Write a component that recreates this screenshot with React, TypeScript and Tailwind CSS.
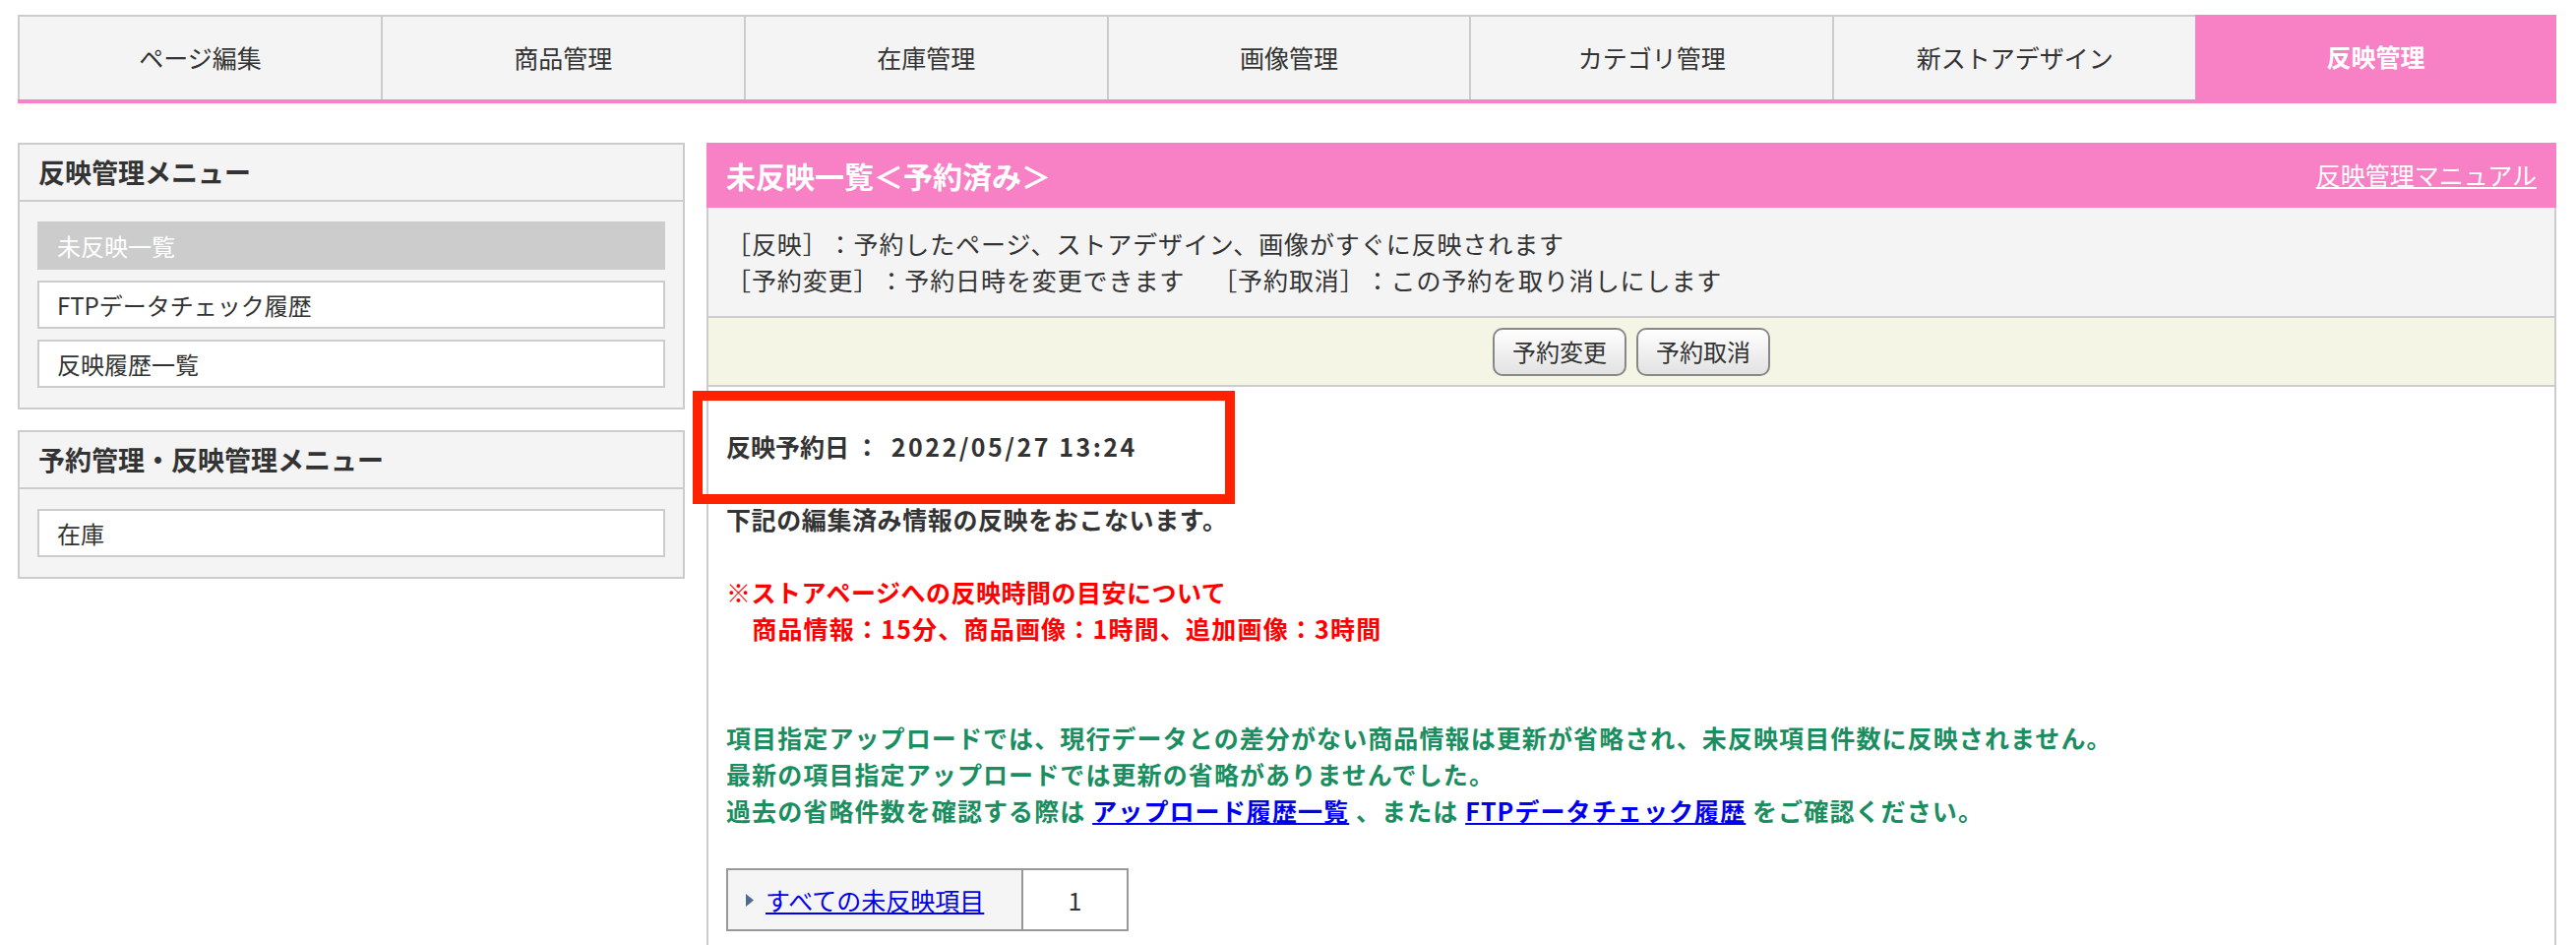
import React from "react";

const tabs = ["ページ編集", "商品管理", "在庫管理", "画像管理", "カテゴリ管理", "新ストアデザイン", "反映管理"];

function SideBox({ title, items }: { title: string; items: { label: string; active?: boolean }[] }) {
  return (
    <div className="border-2 border-[#ccc] bg-[#f4f4f4]">
      <div className="h-[58px] flex items-center px-[19px] border-b-2 border-[#ccc] text-[27px] font-bold text-[#333]">
        {title}
      </div>
      <div className="flex flex-col gap-[11px] px-[18px] py-[20px]">
        {items.map((it) =>
          it.active ? (
            <div key={it.label} className="h-[49px] flex items-center pl-[20px] bg-[#ccc] text-white text-[24px]">
              {it.label}
            </div>
          ) : (
            <div key={it.label} className="h-[49px] flex items-center pl-[18px] bg-white border-2 border-[#ccc] text-[#333] text-[24px]">
              {it.label}
            </div>
          )
        )}
      </div>
    </div>
  );
}

export default function App() {
  return (
    <div className="min-h-screen bg-white pt-[15px] pl-[18px] pr-[20px] font-['Noto_Sans_CJK_JP',sans-serif] text-[#333]">
      {/* global menu */}
      <nav className="flex border-b-4 border-[#f880c4]">
        {tabs.map((t, i) =>
          i === tabs.length - 1 ? (
            <div key={t} className="flex-1 h-[86px] flex items-center justify-center bg-[#f880c4] text-white font-bold text-[25px]">
              {t}
            </div>
          ) : (
            <div key={t} className="flex-1 h-[86px] flex items-center justify-center bg-[#f4f4f4] border-t-2 border-l-2 border-[#ccc] text-[25px]">
              {t}
            </div>
          )
        )}
      </nav>

      <div className="flex gap-[22px] mt-[40px]">
        <aside className="w-[678px] shrink-0 flex flex-col gap-[21px]">
          <SideBox
            title="反映管理メニュー"
            items={[{ label: "未反映一覧", active: true }, { label: "FTPデータチェック履歴" }, { label: "反映履歴一覧" }]}
          />
          <SideBox title="予約管理・反映管理メニュー" items={[{ label: "在庫" }]} />
        </aside>

        <main className="flex-1 flex flex-col">
          <div className="h-[66px] flex items-center justify-between bg-[#f880c4] px-[20px]">
            <h1 className="text-white font-bold text-[30px]">未反映一覧＜予約済み＞</h1>
            <a href="#" className="text-white underline text-[25px]">反映管理マニュアル</a>
          </div>

          <div className="bg-[#f4f4f4] border-x-2 border-[#ccc] px-[18px] py-[18px] text-[25px] leading-[37px] tracking-[0.9px] [text-spacing-trim:space-all]">
            <p>［反映］：予約したページ、ストアデザイン、画像がすぐに反映されます</p>
            <p>
              ［予約変更］：予約日時を変更できます<span className="ml-[28px]">［予約取消］：この予約を取り消しにします</span>
            </p>
          </div>

          <div className="h-[72px] flex items-center justify-center gap-[10px] bg-[#f4f5e5] border-2 border-[#ccc]">
            <button className="h-[49px] px-[18px] rounded-[10px] border-2 border-[#888] bg-linear-to-b from-white to-[#e2e2e2] text-[24px] text-[#333]">
              予約変更
            </button>
            <button className="h-[49px] px-[18px] rounded-[10px] border-2 border-[#888] bg-linear-to-b from-white to-[#e2e2e2] text-[24px] text-[#333]">
              予約取消
            </button>
          </div>

          <div className="relative border-x-2 border-[#ccc] px-[18px] pt-[42px] pb-[60px] text-[25px] leading-[37px]">
            {/* highlight around the scheduled date */}
            <div className="absolute left-[-16px] top-[4px] w-[551px] h-[115px] border-[10px] border-[#ff2200]" />

            <p className="font-bold">
              反映予約日 ：<span className="ml-[12px] tracking-[2.5px]">2022/05/27 13:24</span>
            </p>
            <p className="font-bold mt-[37px] tracking-[0.6px]">下記の編集済み情報の反映をおこないます。</p>

            <div className="font-bold text-[#ff0000] mt-[37px]">
              <p className="tracking-[0.5px]">※ストアページへの反映時間の目安について</p>
              <p className="tracking-[1.2px]">　商品情報：15分、商品画像：1時間、追加画像：3時間</p>
            </div>

            <div className="font-bold text-[#1a8e5f] mt-[74px] tracking-[1.1px]">
              <p>項目指定アップロードでは、現行データとの差分がない商品情報は更新が省略され、未反映項目件数に反映されません。</p>
              <p>最新の項目指定アップロードでは更新の省略がありませんでした。</p>
              <p>
                過去の省略件数を確認する際は{" "}
                <a href="#" className="text-[#0000ee] underline">アップロード履歴一覧</a>
                {" "}、または{" "}
                <a href="#" className="text-[#0000ee] underline">FTPデータチェック履歴</a>
                {" "}をご確認ください。
              </p>
            </div>

            <div className="mt-[40px] flex w-[409px] h-[64px] border-2 border-[#999]">
              <div className="w-[298px] flex items-center gap-[12px] pl-[18px] bg-[#f5f5f5]">
                <svg width="8" height="13" viewBox="0 0 8 13">
                  <polygon points="0,0 8,6.5 0,13" fill="#4f6b8f" />
                </svg>
                <a href="#" className="text-[#0000ee] underline text-[25px]">すべての未反映項目</a>
              </div>
              <div className="flex-1 flex items-center justify-center border-l-2 border-[#999] bg-white">1</div>
            </div>
          </div>
        </main>
      </div>
    </div>
  );
}
